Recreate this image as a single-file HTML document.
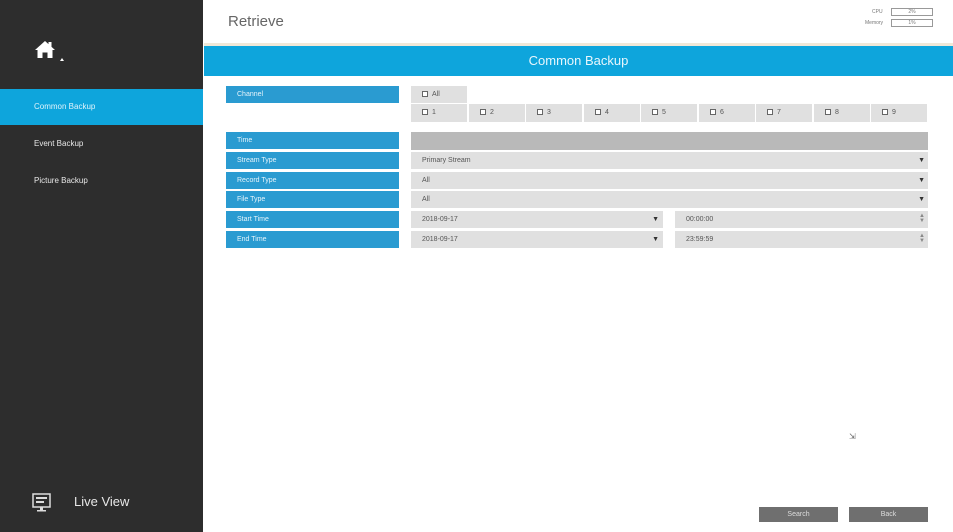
<!DOCTYPE html>
<html><head><meta charset="utf-8"><style>
*{box-sizing:border-box;margin:0;padding:0}
body{width:953px;height:532px;overflow:hidden;background:#fff;font-family:"Liberation Sans",sans-serif;position:relative}
.a{position:absolute}
.side{left:0;top:0;width:203px;height:532px;background:#2d2d2d}
.lab{position:absolute;left:226px;width:173px;height:17px;background:#2a9bd1;color:#e6f4fb;font-size:7px;line-height:18px;padding-left:11px}
.fld{position:absolute;background:#e0e0e0;color:#555;font-size:7px;line-height:18px;padding-left:11px}
.arr{position:absolute;right:3px;top:0;font-size:7px;color:#333}
.cb{display:inline-block;width:6px;height:6px;border:1px solid #666;background:#fff;vertical-align:-1px;margin-right:4px}
.cell{position:absolute;top:104px;width:56px;height:18px;background:#e0e0e0;font-size:7px;color:#555;line-height:18px;padding-left:11px}
</style></head><body>
<div class="a side"></div>
<svg class="a" style="left:34px;top:40px" width="32" height="24" viewBox="0 0 32 24">
<path d="M1 10 L11 1 L21 10 L18.5 10 L18.5 18 L13.5 18 L13.5 12.5 L8.5 12.5 L8.5 18 L3.5 18 L3.5 10 Z" fill="#fff"/>
<rect x="14.5" y="2" width="3" height="5" fill="#fff"/>
<path d="M26 21 L28 18 L30 21 Z" fill="#fff"/>
</svg>
<div class="a" style="left:0;top:89px;width:203px;height:36px;background:#0ea5dc;color:#dff3fb;font-size:8px;line-height:36px;padding-left:34px">Common Backup</div>
<div class="a" style="left:34px;top:139px;color:#e8e8e8;font-size:8px">Event Backup</div>
<div class="a" style="left:34px;top:176px;color:#e8e8e8;font-size:8px">Picture Backup</div>
<svg class="a" style="left:32px;top:493px" width="20" height="20" viewBox="0 0 20 20">
<rect x="1" y="1" width="17" height="13" fill="none" stroke="#ddd" stroke-width="1.5"/>
<rect x="4" y="4" width="11" height="2" fill="#ddd"/><rect x="4" y="8" width="8" height="2" fill="#ddd"/>
<rect x="8" y="14" width="3" height="3" fill="#ddd"/><rect x="5" y="17" width="9" height="1.5" fill="#ddd"/>
</svg>
<div class="a" style="left:74px;top:494px;color:#e8e8e8;font-size:13px">Live View</div>

<div class="a" style="left:228px;top:13px;font-size:15px;color:#666">Retrieve</div>
<div class="a" style="left:872px;top:9px;font-size:5px;color:#777">CPU</div>
<div class="a" style="left:891px;top:8px;width:42px;height:8px;border:1px solid #999;font-size:5px;text-align:center;line-height:6px;color:#777">2%</div>
<div class="a" style="left:865px;top:20px;font-size:5px;color:#777">Memory</div>
<div class="a" style="left:891px;top:19px;width:42px;height:8px;border:1px solid #999;font-size:5px;text-align:center;line-height:6px;color:#777">1%</div>
<div class="a" style="left:204px;top:43px;width:749px;height:3px;background:#f0e8d8"></div>
<div class="a" style="left:204px;top:46px;width:749px;height:30px;background:#0ea5dc;color:#e8f6fc;font-size:13px;text-align:center;line-height:30px">Common Backup</div>

<div class="lab" style="top:86px">Channel</div>
<div class="fld" style="left:411px;top:86px;width:56px;height:17px"><span class="cb"></span>All</div>
<div class="cell" style="left:411px"><span class="cb"></span>1</div>
<div class="cell" style="left:469px"><span class="cb"></span>2</div>
<div class="cell" style="left:526px"><span class="cb"></span>3</div>
<div class="cell" style="left:584px"><span class="cb"></span>4</div>
<div class="cell" style="left:641px"><span class="cb"></span>5</div>
<div class="cell" style="left:699px"><span class="cb"></span>6</div>
<div class="cell" style="left:756px"><span class="cb"></span>7</div>
<div class="cell" style="left:814px"><span class="cb"></span>8</div>
<div class="cell" style="left:871px"><span class="cb"></span>9</div>

<div class="lab" style="top:132px">Time</div>
<div class="fld" style="left:411px;top:132px;width:517px;height:18px;background:#b9b9b9"></div>
<div class="lab" style="top:152px">Stream Type</div>
<div class="fld" style="left:411px;top:152px;width:517px;height:17px">Primary Stream<span class="arr">▼</span></div>
<div class="lab" style="top:172px">Record Type</div>
<div class="fld" style="left:411px;top:172px;width:517px;height:17px">All<span class="arr">▼</span></div>
<div class="lab" style="top:191px">File Type</div>
<div class="fld" style="left:411px;top:191px;width:517px;height:17px">All<span class="arr">▼</span></div>
<div class="lab" style="top:211px">Start Time</div>
<div class="fld" style="left:411px;top:211px;width:252px;height:17px">2018-09-17<span class="arr" style="right:4px">▼</span></div>
<div class="fld" style="left:675px;top:211px;width:253px;height:17px">00:00:00<span class="arr" style="color:#888;font-size:6px;line-height:5px;top:3px">▲<br>▼</span></div>
<div class="lab" style="top:231px">End Time</div>
<div class="fld" style="left:411px;top:231px;width:252px;height:17px">2018-09-17<span class="arr" style="right:4px">▼</span></div>
<div class="fld" style="left:675px;top:231px;width:253px;height:17px">23:59:59<span class="arr" style="color:#888;font-size:6px;line-height:5px;top:3px">▲<br>▼</span></div>

<div class="a" style="left:849px;top:432px;font-size:8px;color:#666">⇲</div>
<div class="a" style="left:759px;top:507px;width:79px;height:15px;background:#6f6f6f;color:#ddd;font-size:7px;text-align:center;line-height:15px">Search</div>
<div class="a" style="left:849px;top:507px;width:79px;height:15px;background:#6f6f6f;color:#ddd;font-size:7px;text-align:center;line-height:15px">Back</div>
</body></html>
